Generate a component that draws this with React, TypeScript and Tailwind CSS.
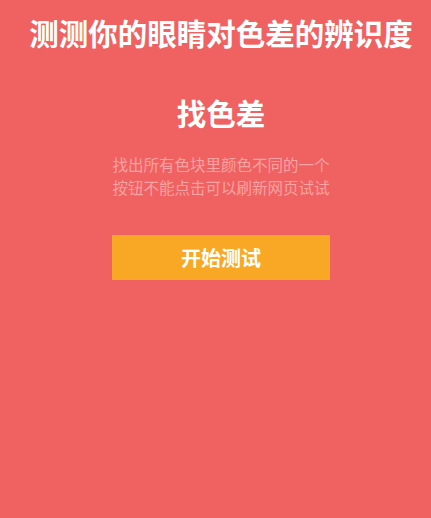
export default function App() {
  return (
    <div
      className="min-h-[518px] w-full bg-[#f06161] pl-[11px] flex flex-col items-center text-white"
      style={{ fontFamily: '"Noto Sans CJK SC", "Noto Sans", sans-serif' }}
    >
      <h1 className="mt-[12px] text-[29.5px] font-bold leading-[40px] whitespace-nowrap">
        测测你的眼睛对色差的辨识度
      </h1>
      <h2 className="mt-[40px] text-[29.5px] font-bold leading-[40px]">找色差</h2>
      <p className="mt-[21px] w-[220px] text-center text-[15.5px] leading-[23px] text-[#f8a3a3]">
        找出所有色块里颜色不同的一个按钮不能点击可以刷新网页试试
      </p>
      <button className="mt-[36px] h-[45px] w-[218px] bg-[#f9a826] text-[20px] font-bold text-white">
        开始测试
      </button>
    </div>
  );
}
